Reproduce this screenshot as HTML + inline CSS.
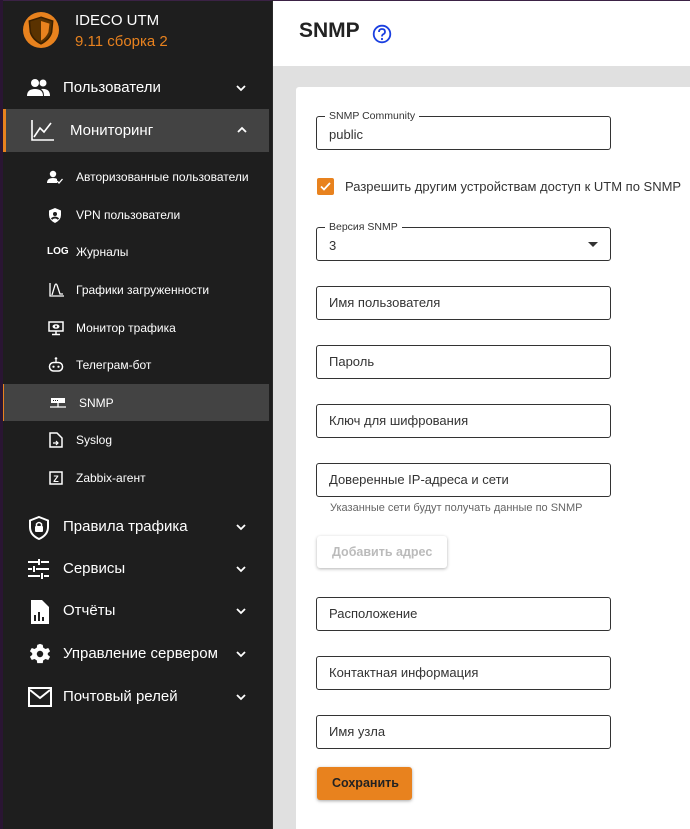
<!DOCTYPE html>
<html><head><meta charset="utf-8"><style>
*{box-sizing:border-box;margin:0;padding:0}
html,body{width:690px;height:829px;overflow:hidden}
body{font-family:"Liberation Sans",sans-serif;background:#e0e0e0;position:relative}
.sb{position:absolute;left:0;top:0;width:272px;height:829px;background:#1e1e1e;border-left:3px solid #2a1533;box-shadow:inset 0 1px 0 #3b2245}
.main{position:absolute;left:272px;top:0;width:418px;height:829px;background:#e0e0e0;border-left:1px solid #2a2a2a;overflow:hidden}
.hdr{position:absolute;left:0;top:0;width:418px;height:66px;background:#fff;box-shadow:inset 0 1px 0 #3b2245}
.card{position:absolute;left:23px;top:87px;width:400px;height:742px;background:#fff;border-radius:3px 3px 0 0}
.t{position:absolute;white-space:nowrap;color:#fff}
.mi{position:absolute;left:0;width:266px;font-size:15px;color:#fff}
.mi .t{left:60px}
.sub .t{left:73px;font-size:12px}
.chev{position:absolute;left:233px;width:10px;height:10px}
.f{position:absolute;left:43px;width:295px;height:34px;border:1px solid #333;border-radius:3px;font-size:13px;color:#333;padding:0 12px;line-height:32px}
.lab{position:absolute;left:8px;top:-8px;background:#fff;padding:0 4px;font-size:10.5px;color:#333;line-height:14px}
svg{position:absolute}
</style></head><body>
<div class="sb">
 <svg style="left:20px;top:12px" width="36" height="36" viewBox="0 0 34 34"><circle cx="17" cy="17" r="17" fill="#e8821e"/><path d="M17 5 L28 8.5 L27 19 Q25 26 17 30 Q9 26 7 19 L6 8.5 Z" fill="#5a3200" stroke="#3a2000" stroke-width="1.5"/><path d="M17 8.5 L25 11 L24 19 Q22 24 17 27 Z" fill="#e8821e"/></svg>
 <div class="t" style="left:72px;top:12px;font-size:15px">IDECO UTM</div>
 <div class="t" style="left:72px;top:33px;font-size:15px;color:#e8821e">9.11 сборка 2</div>

 <div class="mi" style="top:76px;height:24px">
  <svg style="left:24px;top:2px" width="24" height="20" viewBox="0 0 24 20"><circle cx="8" cy="5" r="4" fill="#fff"/><circle cx="16" cy="5" r="3.5" fill="#fff"/><path d="M0 18 Q0 11 8 11 Q16 11 16 18Z" fill="#fff"/><path d="M14 11 Q23 10 23 18 H17 Q17 13 14 11Z" fill="#fff"/></svg>
  <div class="t" style="top:3px">Пользователи</div>
  <svg class="chev" style="top:7px" viewBox="0 0 10 10"><path d="M1 3 L5 7 L9 3" stroke="#fff" stroke-width="1.8" fill="none"/></svg>
 </div>
 <div class="mi" style="top:109px;height:43px;background:#434343;border-left:3px solid #e8821e">
  <svg style="left:25px;top:10px" width="24" height="22" viewBox="0 0 24 22"><path d="M1 1 V21 H23 M3 18 L9 9 L13 13 L20 4" stroke="#fff" stroke-width="1.6" fill="none"/></svg>
  <div class="t" style="left:64px;top:13px">Мониторинг</div>
  <svg class="chev" style="top:16px;left:231px" viewBox="0 0 10 10"><path d="M1 7 L5 3 L9 7" stroke="#fff" stroke-width="1.8" fill="none"/></svg>
 </div>

 <div class="mi sub" style="top:170px"><svg style="left:44px;top:0px" width="16" height="14" viewBox="0 0 16 14"><circle cx="6" cy="4" r="3.2" fill="#fff"/><path d="M0 13 Q0 8 6 8 Q9 8 10 9 V13Z" fill="#fff"/><path d="M10 11 L12 13 L15.5 9" stroke="#fff" stroke-width="1.3" fill="none"/></svg><div class="t">Авторизованные пользователи</div></div>
 <div class="mi sub" style="top:208px"><svg style="left:45px;top:0" width="14" height="15" viewBox="0 0 14 15"><path d="M7 0 L13 2.5 V7 Q13 12 7 15 Q1 12 1 7 V2.5Z" fill="#fff"/><circle cx="7" cy="6" r="2" fill="#1e1e1e"/><path d="M3.5 11 Q7 8 10.5 11" stroke="#1e1e1e" stroke-width="2" fill="none"/></svg><div class="t">VPN пользователи</div></div>
 <div class="mi sub" style="top:245px"><div class="t" style="left:44px;font-size:10px;font-weight:bold;top:1px">LOG</div><div class="t">Журналы</div></div>
 <div class="mi sub" style="top:283px"><svg style="left:46px;top:0" width="16" height="14" viewBox="0 0 16 14"><path d="M1 0 V13 H15 M3 12 L6 2 Q7 0 8 2 L11 11 L14 11" stroke="#fff" stroke-width="1.3" fill="none"/></svg><div class="t">Графики загруженности</div></div>
 <div class="mi sub" style="top:321px"><svg style="left:45px;top:0" width="16" height="15" viewBox="0 0 16 15"><rect x="1" y="1" width="14" height="9" stroke="#fff" stroke-width="1.5" fill="none"/><ellipse cx="8" cy="5.5" rx="3.5" ry="2.3" fill="#fff"/><circle cx="8" cy="5.5" r="1" fill="#1e1e1e"/><path d="M8 10 V13 M4 13.5 H12" stroke="#fff" stroke-width="1.5"/></svg><div class="t">Монитор трафика</div></div>
 <div class="mi sub" style="top:358px"><svg style="left:45px;top:-1px" width="16" height="16" viewBox="0 0 16 16"><circle cx="8" cy="1.5" r="1.3" fill="#fff"/><path d="M8 3 V5" stroke="#fff" stroke-width="1.3"/><rect x="1.5" y="5.5" width="13" height="8.5" rx="4" stroke="#fff" stroke-width="1.5" fill="none"/><circle cx="5.5" cy="9.7" r="1.1" fill="#fff"/><circle cx="10.5" cy="9.7" r="1.1" fill="#fff"/></svg><div class="t">Телеграм-бот</div></div>
 <div class="mi sub" style="top:384px;height:37px;background:#434343;border-left:1px solid #e8821e"><svg style="left:46px;top:14px" width="16" height="11" viewBox="0 0 16 11"><rect x="1" y="0" width="14" height="5" fill="#fff"/><rect x="3" y="2" width="1" height="1" fill="#1e1e1e"/><rect x="5" y="2" width="1" height="1" fill="#1e1e1e"/><rect x="7" y="2" width="1" height="1" fill="#1e1e1e"/><path d="M8 5 V9 M0 9 H16" stroke="#fff" stroke-width="1.3"/></svg><div class="t" style="left:75px;top:12px">SNMP</div></div>
 <div class="mi sub" style="top:433px"><svg style="left:46px;top:-1px" width="14" height="16" viewBox="0 0 14 16"><path d="M1 1 H8 L13 6 V15 H1Z" stroke="#fff" stroke-width="1.5" fill="none"/><path d="M4 11 H9 M7 9 L9 11 L7 13" stroke="#fff" stroke-width="1.2" fill="none"/></svg><div class="t">Syslog</div></div>
 <div class="mi sub" style="top:471px"><svg style="left:46px;top:0" width="14" height="14" viewBox="0 0 14 14"><rect x="1" y="1" width="12" height="12" stroke="#fff" stroke-width="1.5" fill="none"/><text x="7" y="11" font-size="9" font-weight="bold" fill="#fff" text-anchor="middle" font-family="Liberation Sans">Z</text></svg><div class="t">Zabbix-агент</div></div>

 <div class="mi" style="top:516px"><svg style="left:25px;top:0" width="22" height="24" viewBox="0 0 22 24"><path d="M11 1 L20 4.5 V11 Q20 19 11 23 Q2 19 2 11 V4.5Z" stroke="#fff" stroke-width="2" fill="none"/><rect x="7" y="10" width="8" height="6" rx="1" fill="#fff"/><path d="M8.5 10 V8 Q11 5 13.5 8 V10" stroke="#fff" stroke-width="1.5" fill="none"/></svg><div class="t" style="top:2px">Правила трафика</div><svg class="chev" style="top:6px" viewBox="0 0 10 10"><path d="M1 3 L5 7 L9 3" stroke="#fff" stroke-width="1.8" fill="none"/></svg></div>
 <div class="mi" style="top:558px"><svg style="left:25px;top:1px" width="22" height="20" viewBox="0 0 22 20"><path d="M0 3 H10 M13 3 H21 M0 10 H4 M8 10 H21 M0 17 H12 M16 17 H21 M11 0 V6 M6 7 V13 M14 14 V20" stroke="#fff" stroke-width="2"/></svg><div class="t" style="top:2px">Сервисы</div><svg class="chev" style="top:6px" viewBox="0 0 10 10"><path d="M1 3 L5 7 L9 3" stroke="#fff" stroke-width="1.8" fill="none"/></svg></div>
 <div class="mi" style="top:600px"><svg style="left:27px;top:0" width="20" height="24" viewBox="0 0 20 24"><path d="M1 0 H12 L19 7 V24 H1Z" fill="#fff"/><path d="M5 21 V15 M9 21 V12 M13 21 V17" stroke="#1e1e1e" stroke-width="2"/></svg><div class="t" style="top:2px">Отчёты</div><svg class="chev" style="top:6px" viewBox="0 0 10 10"><path d="M1 3 L5 7 L9 3" stroke="#fff" stroke-width="1.8" fill="none"/></svg></div>
 <div class="mi" style="top:643px"><svg style="left:25px;top:0" width="24" height="22" viewBox="0 0 24 24"><path d="M12 1 L15 2 L15.5 5 L18 6.5 L21 5.5 L23 9 L20.5 11 V13 L23 15 L21 18.5 L18 17.5 L15.5 19 L15 22 H9 L8.5 19 L6 17.5 L3 18.5 L1 15 L3.5 13 V11 L1 9 L3 5.5 L6 6.5 L8.5 5 L9 2Z" fill="#fff"/><circle cx="12" cy="12" r="3.5" fill="#1e1e1e"/></svg><div class="t" style="top:2px">Управление сервером</div><svg class="chev" style="top:6px" viewBox="0 0 10 10"><path d="M1 3 L5 7 L9 3" stroke="#fff" stroke-width="1.8" fill="none"/></svg></div>
 <div class="mi" style="top:686px"><svg style="left:25px;top:1px" width="24" height="20" viewBox="0 0 24 20"><rect x="1" y="1" width="22" height="18" stroke="#fff" stroke-width="2" fill="none"/><path d="M2 3 L12 11 L22 3" stroke="#fff" stroke-width="2" fill="none"/></svg><div class="t" style="top:2px">Почтовый релей</div><svg class="chev" style="top:6px" viewBox="0 0 10 10"><path d="M1 3 L5 7 L9 3" stroke="#fff" stroke-width="1.8" fill="none"/></svg></div>
</div>

<div class="main">
 <div class="hdr">
  <div class="t" style="left:26px;top:19px;font-size:21px;font-weight:bold;color:#222">SNMP</div>
  <svg style="left:99px;top:24px" width="20" height="20" viewBox="0 0 20 20"><circle cx="10" cy="10" r="8.3" stroke="#1a3fe0" stroke-width="1.8" fill="none"/><path d="M7 8 Q7 5 10 5 Q13 5 13 7.7 Q13 9.5 10.8 10.5 Q10 11 10 12.5" stroke="#1a3fe0" stroke-width="1.8" fill="none"/><circle cx="10" cy="15" r="1.1" fill="#1a3fe0"/></svg>
 </div>
 <div class="card">
  <div class="f" style="top:29px;left:20px"><span class="lab">SNMP Community</span><span style="position:relative;top:2px">public</span></div>
  <div style="position:absolute;left:21px;top:91px;width:17px;height:17px;background:#e8821e;border-radius:2px"><svg style="left:2px;top:2px" width="13" height="13" viewBox="0 0 13 13"><path d="M2 6.5 L5 9.5 L11 3" stroke="#fff" stroke-width="1.8" fill="none"/></svg></div>
  <div class="t" style="left:49px;top:92px;font-size:13px;color:#333">Разрешить другим устройствам доступ к UTM по SNMP</div>
  <div class="f" style="top:140px;left:20px"><span class="lab">Версия SNMP</span><span style="position:relative;top:2px">3</span><svg style="left:271px;top:14px" width="10" height="5" viewBox="0 0 10 5"><path d="M0 0 H10 L5 5Z" fill="#333"/></svg></div>
  <div class="f" style="top:199px;left:20px">Имя пользователя</div>
  <div class="f" style="top:258px;left:20px">Пароль</div>
  <div class="f" style="top:317px;left:20px">Ключ для шифрования</div>
  <div class="f" style="top:376px;left:20px">Доверенные IP-адреса и сети</div>
  <div class="t" style="left:34px;top:415px;font-size:11px;color:#666">Указанные сети будут получать данные по SNMP</div>
  <div style="position:absolute;left:21px;top:449px;width:130px;height:32px;border-radius:3px;background:#fff;box-shadow:0 1px 3px rgba(0,0,0,.3);font-size:12.5px;font-weight:bold;color:#bbb;line-height:32px;padding-left:15px">Добавить адрес</div>
  <div class="f" style="top:510px;left:20px">Расположение</div>
  <div class="f" style="top:569px;left:20px">Контактная информация</div>
  <div class="f" style="top:628px;left:20px">Имя узла</div>
  <div style="position:absolute;left:21px;top:680px;width:95px;height:33px;border-radius:3px;background:#e8821e;box-shadow:0 1px 3px rgba(0,0,0,.35);font-size:12.5px;font-weight:bold;color:#222;line-height:33px;padding-left:15px">Сохранить</div>
 </div>
</div>
</body></html>
